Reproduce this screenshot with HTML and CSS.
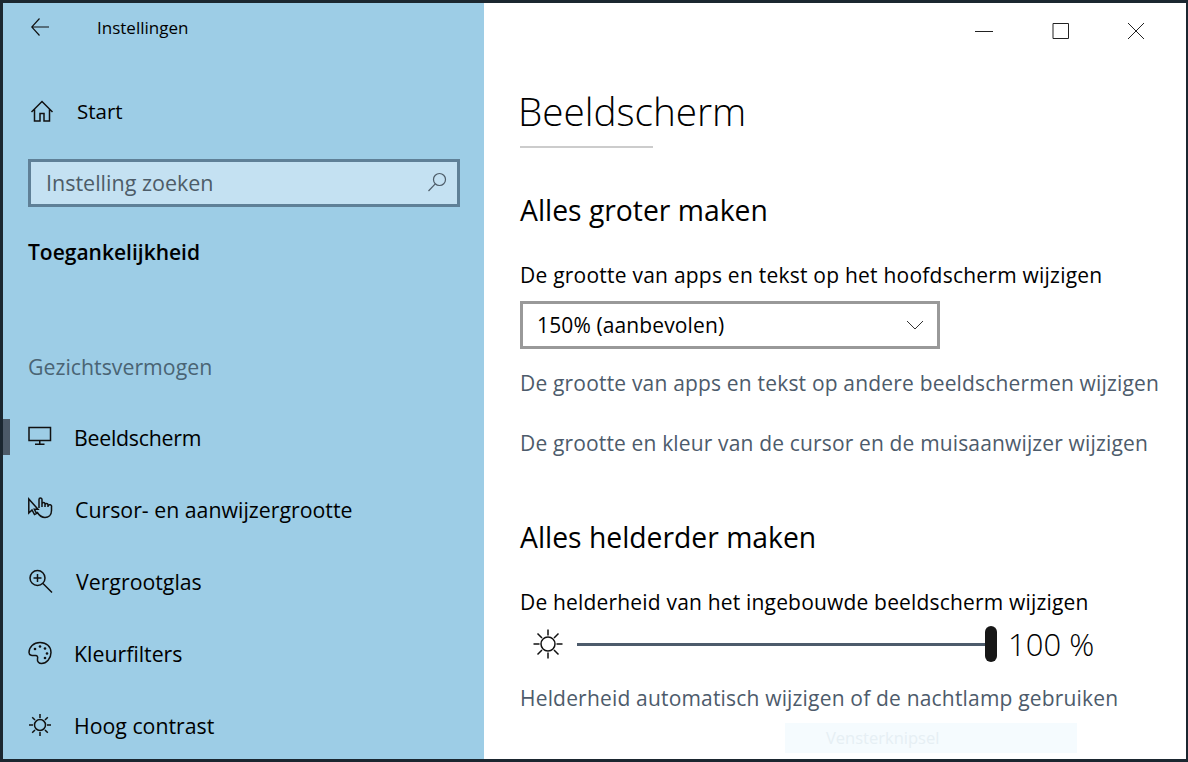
FILE: index.html
```html
<!DOCTYPE html>
<html lang="nl">

<head>
    <meta charset="UTF-8">
    <title>Instellingen</title>
    <link rel="stylesheet" href="styles.css">
</head>

<body>
    <div class="window">
        <aside class="sidebar">
            <div class="app-bar">
                <svg class="back-icon" width="18" height="18" viewBox="0 0 18 18"><path d="M8.500 .5 .7 9l7.800 8.500M.7 9H18" /></svg>
                <span class="app-title">Instellingen</span>
            </div>
            <a class="start-row">
                <svg class="icon" width="24" height="24" viewBox="0 0 24 24"><path d="M1.500 13 12 2.500 22.500 13M4.500 10.500V22h5.500v-7.500h4V22h5.500V10.500" /></svg>
                <span>Start</span>
            </a>
            <div class="search-box">
                <span>Instelling zoeken</span>
                <svg class="search-icon" width="20" height="20" viewBox="0 0 20 20"><circle cx="12.500" cy="7.500" r="6" /><path d="M8.300 11.800 1.500 19" /></svg>
            </div>
            <h2 class="side-heading">Toegankelijkheid</h2>
            <h3 class="side-group">Gezichtsvermogen</h3>
            <nav class="side-nav">
                <a class="nav-item active">
                    <svg class="icon" width="24" height="24" viewBox="0 0 24 24"><path d="M1 2.500h21.500v13H1zM11.750 15.500v3.500M7 19.250h9.500" /></svg>
                    <span>Beeldscherm</span>
                </a>
                <a class="nav-item">
                    <svg class="icon" width="25" height="24" viewBox="0 0 25 24"><path d="M.8 2v14l3.200-3 2.500 4.500 2-1-2.200-4.300H10L.8 2zM11 11V2.500a1.500 1.500 0 0 1 3 0V10M14 7a1.500 1.500 0 0 1 3 0v3M17 8a1.500 1.500 0 0 1 3 0v2M20 9a1.600 1.600 0 0 1 3.500 1v3.500c0 4.500-3 7-6.500 7-3.500 0-5.500-1.500-8-5.500" /></svg>
                    <span>Cursor- en aanwijzergrootte</span>
                </a>
                <a class="nav-item">
                    <svg class="icon" width="26" height="24" viewBox="0 0 26 24"><circle cx="9.500" cy="9" r="7.500" /><path d="M15 14.500 24 23.500M9.500 5v8M5.500 9h8" /></svg>
                    <span>Vergrootglas</span>
                </a>
                <a class="nav-item">
                    <svg class="icon" width="24" height="24" viewBox="0 0 24 24"><path d="M12 1.500C5.500 1.500 1 6 1 11.500c0 3.500 4.500 3 6.500 3 2 0 2.500 1.500 2 3.500-.5 2.500 1.500 4.500 4 4.500 5 0 9.500-5 9.500-11C23 5.500 18.500 1.500 12 1.500z" /><circle class="dot" cx="7" cy="8" r="1.300" /><circle class="dot" cx="12" cy="5.500" r="1.300" /><circle class="dot" cx="17" cy="7.500" r="1.300" /><circle class="dot" cx="19" cy="12.500" r="1.300" /><circle class="dot" cx="17" cy="17" r="1.300" /></svg>
                    <span>Kleurfilters</span>
                </a>
                <a class="nav-item">
                    <svg class="icon" width="24" height="24" viewBox="0 0 24 24"><circle cx="12" cy="12" r="5.500" /><path d="M12 1v4M12 19v4M1 12h4M19 12h4M4.200 4.200l2.800 2.800M17 17l2.800 2.800M4.200 19.800 7 17M17 7l2.800-2.800" /></svg>
                    <span>Hoog contrast</span>
                </a>
            </nav>
        </aside>

        <main class="content">
            <div class="window-controls">
                <svg width="18" height="16" viewBox="0 0 18 16"><path d="M0 8.500h18" /></svg>
                <svg width="18" height="16" viewBox="0 0 18 16"><path d="M2 .5h15.500v15H2z" /></svg>
                <svg width="18" height="18" viewBox="0 0 18 18"><path d="M1 1l16 16M17 1 1 17" /></svg>
            </div>
            <h1 class="page-title">Beeldscherm</h1>
            <div class="title-rule"></div>

            <h2 class="section-title first">Alles groter maken</h2>
            <p class="label">De grootte van apps en tekst op het hoofdscherm wijzigen</p>
            <div class="select-box">
                <span>150% (aanbevolen)</span>
                <svg width="18" height="10" viewBox="0 0 18 10"><path d="M1 1l8 8 8-8" /></svg>
            </div>
            <a class="link first-link">De grootte van apps en tekst op andere beeldschermen wijzigen</a>
            <a class="link second-link">De grootte en kleur van de cursor en de muisaanwijzer wijzigen</a>

            <h2 class="section-title second">Alles helderder maken</h2>
            <p class="label brightness-label">De helderheid van het ingebouwde beeldscherm wijzigen</p>
            <div class="slider-row">
                <svg class="sun" width="32" height="32" viewBox="0 0 32 32"><circle cx="16" cy="16" r="7" /><path d="M16 1.500v6M16 24.500v6M1.500 16h6M24.500 16h6M5.500 5.500l4.500 4.500M22 22l4.500 4.500M5.500 26.500 10 22M22 10l4.500-4.500" /></svg>
                <div class="slider-track"><div class="slider-thumb"></div></div>
                <span class="slider-value">100 %</span>
            </div>
            <a class="link third-link">Helderheid automatisch wijzigen of de nachtlamp gebruiken</a>
            <div class="ghost-tip">Vensterknipsel</div>
        </main>
    </div>
</body>

</html>
```

FILE: styles.css
```css
* {
    box-sizing: border-box;
}

html,
body {
    margin: 0;
    padding: 0;
}

body {
    font-family: "Open Sans", "Noto Sans", sans-serif;
    color: #000;
}

.window {
    width: 1188px;
    height: 762px;
    display: flex;
    border: 3px solid #1b2730;
    border-right-width: 2px;
    background-color: #fff;
    overflow: hidden;
}

/* sidebar */
.sidebar {
    width: 481px;
    flex-shrink: 0;
    background-color: #9dcde6;
}

.icon,
.search-icon {
    fill: none;
    stroke: #111;
    stroke-width: 1.500;
    flex-shrink: 0;
}

.back-icon {
    fill: none;
    stroke: #111;
    stroke-width: 1.200;
}

.app-bar {
    display: flex;
    align-items: center;
    height: 48px;
    padding-left: 28px;
}

.app-title {
    margin-left: 48px;
    font-size: 17px;
}

.start-row {
    display: flex;
    align-items: center;
    height: 50px;
    margin-top: 35px;
    padding-left: 27px;
    font-size: 20.500px;
}

.start-row span {
    margin-left: 23px;
}

.search-box {
    display: flex;
    align-items: center;
    justify-content: space-between;
    width: 432px;
    height: 48px;
    margin: 23px 0 0 25px;
    padding: 0 10px 2px 15px;
    border: 3px solid #5f8097;
    background-color: #c4e1f2;
    color: #4d5c68;
    font-size: 21.500px;
}

.search-icon {
    stroke: #4d5c68;
    stroke-width: 1.200;
}

.side-heading {
    margin: 27px 0 0 25px;
    height: 36px;
    line-height: 36px;
    font-size: 21px;
    font-weight: 600;
}

.side-group {
    margin: 80px 0 0 25px;
    height: 34px;
    line-height: 34px;
    font-size: 21.300px;
    font-weight: 400;
    color: #4a6474;
}

.side-nav {
    margin-top: 17px;
}

.nav-item {
    display: flex;
    align-items: center;
    height: 72px;
    padding-left: 25px;
    font-size: 21.300px;
}

.nav-item span {
    margin-left: 22px;
}

.nav-item.active {
    position: relative;
    letter-spacing: -.25px;
}

.nav-item.active::before {
    content: "";
    position: absolute;
    left: 0;
    top: 18px;
    width: 7px;
    height: 36px;
    background-color: #4c5a68;
}

.dot {
    fill: #111;
    stroke: none;
}

/* right side */
.content {
    flex: 1;
    padding-left: 36px;
}

.window-controls {
    display: flex;
    align-items: center;
    justify-content: flex-end;
    gap: 58px;
    height: 56px;
    padding-right: 41px;
}

.window-controls svg {
    fill: none;
    stroke: #222;
    stroke-width: 1;
}

.page-title {
    margin: 27px 0 0 -2px;
    height: 50px;
    line-height: 50px;
    font-size: 38.700px;
    font-weight: 300;
}

.title-rule {
    width: 133px;
    height: 2px;
    margin-top: 10px;
    background-color: #cccccc;
}

.section-title {
    height: 40px;
    line-height: 40px;
    margin: 0;
    font-size: 28.300px;
    font-weight: 400;
}

.section-title.first {
    margin-top: 42px;
}

.section-title.second {
    margin-top: 58px;
}

.label {
    height: 32px;
    line-height: 32px;
    margin: 29px 0 0;
    font-size: 21px;
    letter-spacing: .23px;
}

.brightness-label {
    letter-spacing: .18px;
}

.select-box {
    display: flex;
    align-items: center;
    justify-content: space-between;
    width: 420px;
    height: 48px;
    margin-top: 10px;
    padding: 0 13px 0 14px;
    border: 3px solid #999;
    font-size: 21px;
    letter-spacing: .12px;
}

.select-box svg {
    fill: none;
    stroke: #333;
    stroke-width: 1;
}

.link {
    display: block;
    height: 32px;
    line-height: 32px;
    font-size: 21px;
    letter-spacing: .18px;
    color: #4d5b6b;
}

.first-link {
    margin-top: 18px;
}

.second-link {
    margin-top: 28px;
    letter-spacing: .15px;
}

.slider-row {
    display: flex;
    align-items: center;
    height: 50px;
    margin-top: 1px;
    padding-left: 12px;
}

.sun {
    fill: none;
    stroke: #111;
    stroke-width: 1.500;
}

.slider-track {
    position: relative;
    width: 420px;
    height: 3px;
    margin-left: 13px;
    background-color: #4d5b6b;
}

.slider-thumb {
    position: absolute;
    right: 0;
    top: -17px;
    width: 12px;
    height: 36px;
    border-radius: 6px;
    background-color: #171717;
}

.slider-value {
    margin-left: 11px;
    font-size: 31px;
    font-weight: 300;
}

.third-link {
    margin-top: 13px;
}

.ghost-tip {
    width: 292px;
    height: 30px;
    margin: 9px 0 0 265px;
    padding-left: 41px;
    line-height: 30px;
    background-color: #f5fbfe;
    color: #e6eff4;
    font-size: 16.500px;
}
```
